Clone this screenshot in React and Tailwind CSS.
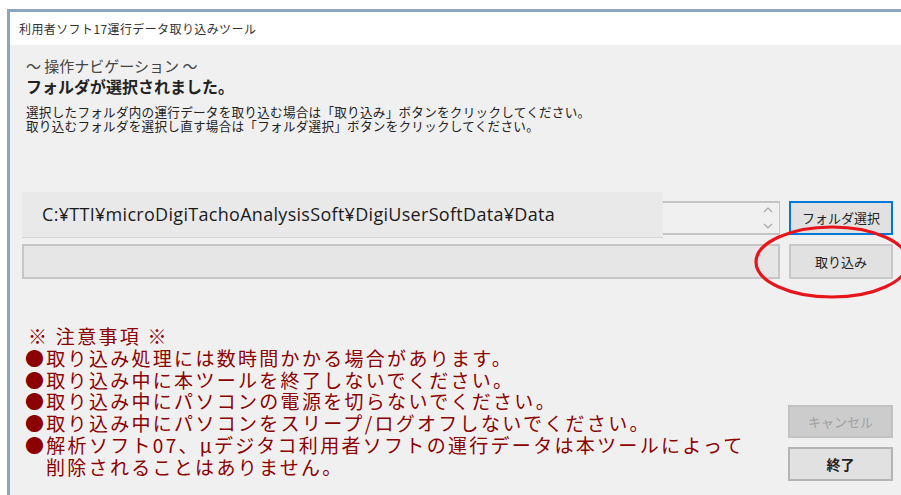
import React from 'react';

const jp = { fontFamily: '"Noto Sans CJK JP", "Noto Sans", sans-serif' };

const notices = [
  '●取り込み処理には数時間かかる場合があります。',
  '●取り込み中に本ツールを終了しないでください。',
  '●取り込み中にパソコンの電源を切らないでください。',
  '●取り込み中にパソコンをスリープ/ログオフしないでください。',
  '●解析ソフト07、μデジタコ利用者ソフトの運行データは本ツールによって',
];

function SpinArrows() {
  return (
    <svg width="12" height="28" viewBox="0 0 12 28" className="shrink-0">
      <path d="M2 8 L6 4 L10 8" fill="none" stroke="#a8a8a8" strokeWidth="1.2" />
      <path d="M2 20 L6 24 L10 20" fill="none" stroke="#a8a8a8" strokeWidth="1.2" />
    </svg>
  );
}

export default function App() {
  return (
    <div className="relative w-[901px] h-[495px] bg-white pt-[9px] pl-[7px] overflow-hidden" style={jp}>
      <div className="h-full flex flex-col border-l-[3px] border-t-[3px] border-[#8ba6be]">
        {/* title bar */}
        <div className="h-[33px] shrink-0 bg-white flex items-center pl-[9px] text-[12px] tracking-[0.4px] text-[#333]">
          利用者ソフト17運行データ取り込みツール
        </div>

        <div className="flex-1 bg-[#f0f0f0] flex flex-col">
          {/* navigation */}
          <div className="pt-[11px] pl-[16px] text-[#222]">
            <div className="text-[15px] leading-[20px] text-[#444]">〜 操作ナビゲーション 〜</div>
            <div className="text-[16px] leading-[20px] font-bold">フォルダが選択されました。</div>
            <div className="mt-[9px] text-[12.6px] leading-[14px] tracking-[0.25px]">
              <div>選択したフォルダ内の運行データを取り込む場合は「取り込み」ボタンをクリックしてください。</div>
              <div>取り込むフォルダを選択し直す場合は「フォルダ選択」ボタンをクリックしてください。</div>
            </div>
          </div>

          {/* folder path row */}
          <div className="mt-[68px] pl-[12px] pr-[8px] flex gap-[9px] h-[34px]">
            <div className="relative w-[758px] h-full bg-[#f0f0f0] border-y-2 border-r border-[#c4c4c4] flex items-center justify-end pr-[5px]">
              <SpinArrows />
              <div className="absolute left-0 top-[-11px] w-[641px] h-[46px] bg-[#e9e9e9] border-b border-[#d6d6d6] flex items-center pl-[20px] text-[18px] tracking-[0.3px] text-[#1a1a1a]" style={{ fontFamily: '"Open Sans", "Noto Sans CJK JP", sans-serif' }}>
                C:¥TTI¥microDigiTachoAnalysisSoft¥DigiUserSoftData¥Data
              </div>
            </div>
            <button className="w-[104px] h-full bg-[#e1e1e1] border-2 border-[#0078d7] text-[13px] text-[#222]">
              フォルダ選択
            </button>
          </div>

          {/* progress row */}
          <div className="mt-[9px] pl-[12px] pr-[8px] flex gap-[9px] h-[35px]">
            <div className="w-[758px] h-full bg-[#e6e6e6] border-2 border-[#c6c6c6]" />
            <button className="w-[104px] h-full bg-[#e1e1e1] border-2 border-[#c8c8c8] text-[13px] text-[#222]">
              取り込み
            </button>
          </div>

          {/* notices and bottom buttons */}
          <div className="mt-[46px] pl-[15px] pr-[8px] flex justify-between">
            <div className="text-[19px] leading-[21.8px] tracking-[2.3px] text-[#8b0000]">
              <div className="pl-[3px]">※ 注意事項 ※</div>
              {notices.map((n) => (
                <div key={n}>{n}</div>
              ))}
              <div className="pl-[21px]">削除されることはありません。</div>
            </div>
            <div className="mt-[80px] flex flex-col gap-[9px]">
              <button className="w-[105px] h-[33px] bg-[#cccccc] border-2 border-[#c2c2c2] text-[13px] text-[#a0a0a0]">
                キャンセル
              </button>
              <button className="w-[105px] h-[34px] bg-[#e1e1e1] border-2 border-[#b4b4b4] text-[14px] font-bold text-[#222]">
                終了
              </button>
            </div>
          </div>
        </div>
      </div>

      {/* red annotation ring */}
      <svg className="absolute left-0 top-0 pointer-events-none" width="901" height="495">
        <ellipse cx="832" cy="262" rx="76" ry="35" fill="none" stroke="#e8141c" strokeWidth="3.2" />
      </svg>
    </div>
  );
}
